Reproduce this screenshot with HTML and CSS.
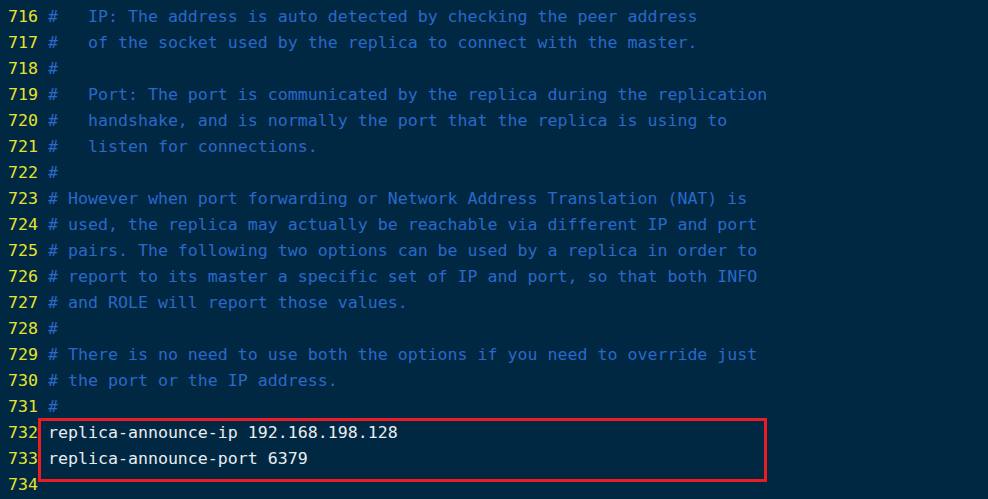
FILE: index.html
```html
<!DOCTYPE html>
<html>
<head>
<meta charset="utf-8">
<link rel="stylesheet" href="styles.css">
</head>
<body>
<div class="term">
  <div class="line"><span class="num">716</span><span class="cm">#   IP: The address is auto detected by checking the peer address</span></div>
  <div class="line"><span class="num">717</span><span class="cm">#   of the socket used by the replica to connect with the master.</span></div>
  <div class="line"><span class="num">718</span><span class="cm">#</span></div>
  <div class="line"><span class="num">719</span><span class="cm">#   Port: The port is communicated by the replica during the replication</span></div>
  <div class="line"><span class="num">720</span><span class="cm">#   handshake, and is normally the port that the replica is using to</span></div>
  <div class="line"><span class="num">721</span><span class="cm">#   listen for connections.</span></div>
  <div class="line"><span class="num">722</span><span class="cm">#</span></div>
  <div class="line"><span class="num">723</span><span class="cm"># However when port forwarding or Network Address Translation (NAT) is</span></div>
  <div class="line"><span class="num">724</span><span class="cm"># used, the replica may actually be reachable via different IP and port</span></div>
  <div class="line"><span class="num">725</span><span class="cm"># pairs. The following two options can be used by a replica in order to</span></div>
  <div class="line"><span class="num">726</span><span class="cm"># report to its master a specific set of IP and port, so that both INFO</span></div>
  <div class="line"><span class="num">727</span><span class="cm"># and ROLE will report those values.</span></div>
  <div class="line"><span class="num">728</span><span class="cm">#</span></div>
  <div class="line"><span class="num">729</span><span class="cm"># There is no need to use both the options if you need to override just</span></div>
  <div class="line"><span class="num">730</span><span class="cm"># the port or the IP address.</span></div>
  <div class="line"><span class="num">731</span><span class="cm">#</span></div>
  <div class="line"><span class="num">732</span><span class="tx">replica-announce-ip 192.168.198.128</span></div>
  <div class="line"><span class="num">733</span><span class="tx">replica-announce-port 6379</span></div>
  <div class="line"><span class="num">734</span><span class="tx"></span></div>
  <div class="highlight"></div>
</div>
</body>
</html>
```

FILE: styles.css
```css
html, body {
  margin: 0;
  padding: 0;
  background: #012843;
}
body {
  width: 988px;
  height: 499px;
  overflow: hidden;
}
.term {
  position: relative;
  padding: 4px 0 0 8px;
  font-family: "DejaVu Sans Mono", "Liberation Mono", monospace;
  font-size: 16.6px;
  line-height: 26px;
}
.line {
  display: flex;
  white-space: pre;
  height: 26px;
}
.num {
  color: #e6e32e;
  width: 30px;
  margin-right: 10px;
}
.cm {
  color: #2a68c9;
}
.tx {
  color: #e9edf0;
}
.highlight {
  position: absolute;
  left: 38px;
  top: 418px;
  width: 723px;
  height: 58px;
  border: 3px solid #eb1c24;
}
```
